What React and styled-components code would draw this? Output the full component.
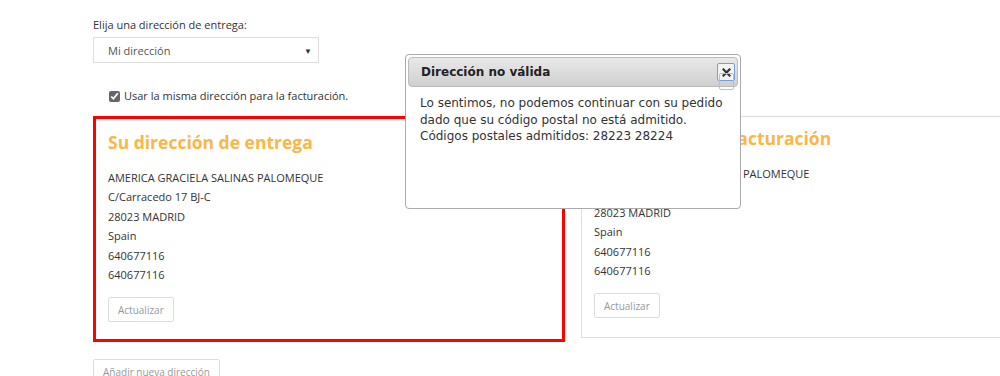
import React from "react";
import styled, { createGlobalStyle } from "styled-components";

const GlobalStyle = createGlobalStyle`
  html, body {
    margin: 0;
    padding: 0;
    background: #fff;
    overflow: hidden;
  }
  body {
    font-family: "Open Sans", "Liberation Sans", sans-serif;
    font-size: 11px;
    color: #333;
  }
`;

const Page = styled.div`
  position: relative;
  width: 1000px;
  height: 376px;
  overflow: hidden;
  padding: 17px 0 0 93px;
  box-sizing: border-box;
`;

const Label = styled.div`
  font-size: 11px;
  line-height: 16px;
  color: #333;
  margin-bottom: 4px;
`;

const Select = styled.div`
  width: 226px;
  height: 26px;
  box-sizing: border-box;
  border: 1px solid #ddd;
  display: flex;
  align-items: center;
  justify-content: space-between;
  padding: 0 6px 0 14px;
  color: #555;
  font-size: 11px;
`;

const Arrow = styled.span`
  font-size: 8px;
  color: #333;
`;

const CheckRow = styled.label`
  display: flex;
  align-items: center;
  gap: 4px;
  margin: 25px 0 0 16px;
  font-size: 11px;
  line-height: 16px;
  color: #333;
`;

const Check = styled.input`
  width: 11px;
  height: 11px;
  margin: 0;
  accent-color: #666;
`;

const Boxes = styled.div`
  display: grid;
  grid-template-columns: 472px 472px;
  gap: 16px;
  margin-top: 12px;
  align-items: start;
`;

const AddressBox = styled.div`
  box-sizing: border-box;
  height: ${(p) => (p.$active ? 226 : 222)}px;
  border: ${(p) => (p.$active ? "3px solid #ff0000" : "1px solid #ddd")};
  padding: ${(p) => (p.$active ? "10px 12px" : "8px 12px")};
`;

const BoxTitle = styled.h3`
  margin: 0 0 13px;
  font-size: 17.5px;
  line-height: 26px;
  font-weight: 700;
  color: #fbb646;
`;

const Line = styled.div`
  font-size: 11px;
  line-height: 19.4px;
  color: #333;
`;

const Button = styled.button`
  font-family: "Open Sans", "Liberation Sans", sans-serif;
  font-size: 10px;
  color: #999;
  background: #fff;
  border: 1px solid #ddd;
  border-radius: 2px;
  height: 25px;
  padding: 0 9px;
  margin-top: ${(p) => p.$mt || 0}px;
`;

const Dialog = styled.div`
  position: absolute;
  left: 405px;
  top: 54px;
  width: 336px;
  height: 155px;
  box-sizing: border-box;
  background: #fff;
  border: 1px solid #aaa;
  border-radius: 4px;
  padding: 2px;
  font-family: "DejaVu Sans", Verdana, sans-serif;
`;

const TitleBar = styled.div`
  position: relative;
  height: 30px;
  box-sizing: border-box;
  border: 1px solid #bbb;
  border-radius: 4px;
  background: linear-gradient(#e9e9e9, #cfcfcf);
  display: flex;
  align-items: center;
  padding: 0 12px;
  font-size: 12px;
  font-weight: 700;
  color: #222;
`;

const CloseBtn = styled.span`
  position: absolute;
  right: 2px;
  top: 5px;
  width: 18px;
  height: 18px;
  box-sizing: border-box;
  border: 1px solid #7a9fd8;
  border-radius: 2px;
  background: #f2f2f2;
  display: flex;
  align-items: center;
  justify-content: center;
  &::after {
    content: "";
    position: absolute;
    left: 1px;
    top: 9px;
    width: 13px;
    height: 15px;
    border: 1px solid #a9c1ea;
    border-radius: 2px;
  }
`;

const DialogBody = styled.div`
  padding: 8px 12px;
  font-size: 12px;
  line-height: 16.5px;
  color: #333;
`;

const lines = [
  "AMERICA GRACIELA SALINAS PALOMEQUE",
  "C/Carracedo 17 BJ-C",
  "28023 MADRID",
  "Spain",
  "640677116",
  "640677116",
];

function Address({ title, active }) {
  return (
    <AddressBox $active={active}>
      <BoxTitle>{title}</BoxTitle>
      {lines.map((l, i) => (
        <Line key={i}>{l}</Line>
      ))}
      <Button $mt={13}>Actualizar</Button>
    </AddressBox>
  );
}

export default function App() {
  return (
    <>
      <GlobalStyle />
      <Page>
        <Label>Elija una dirección de entrega:</Label>
        <Select>
          Mi dirección
          <Arrow>▼</Arrow>
        </Select>
        <CheckRow>
          <Check type="checkbox" defaultChecked />
          Usar la misma dirección para la facturación.
        </CheckRow>
        <Boxes>
          <Address title="Su dirección de entrega" active />
          <Address title="Su dirección de facturación" />
        </Boxes>
        <Button $mt={17}>Añadir nueva dirección</Button>

        <Dialog>
          <TitleBar>
            Dirección no válida
            <CloseBtn>
              <svg width="9" height="9" viewBox="0 0 9 9">
                <path
                  d="M1.5 1.5 L7.5 7.5 M7.5 1.5 L1.5 7.5"
                  stroke="#333"
                  strokeWidth="2.2"
                  strokeLinecap="square"
                />
              </svg>
            </CloseBtn>
          </TitleBar>
          <DialogBody>
            Lo sentimos, no podemos continuar con su pedido dado que su código
            postal no está admitido.
            <br />
            Códigos postales admitidos: 28223 28224
          </DialogBody>
        </Dialog>
      </Page>
    </>
  );
}
